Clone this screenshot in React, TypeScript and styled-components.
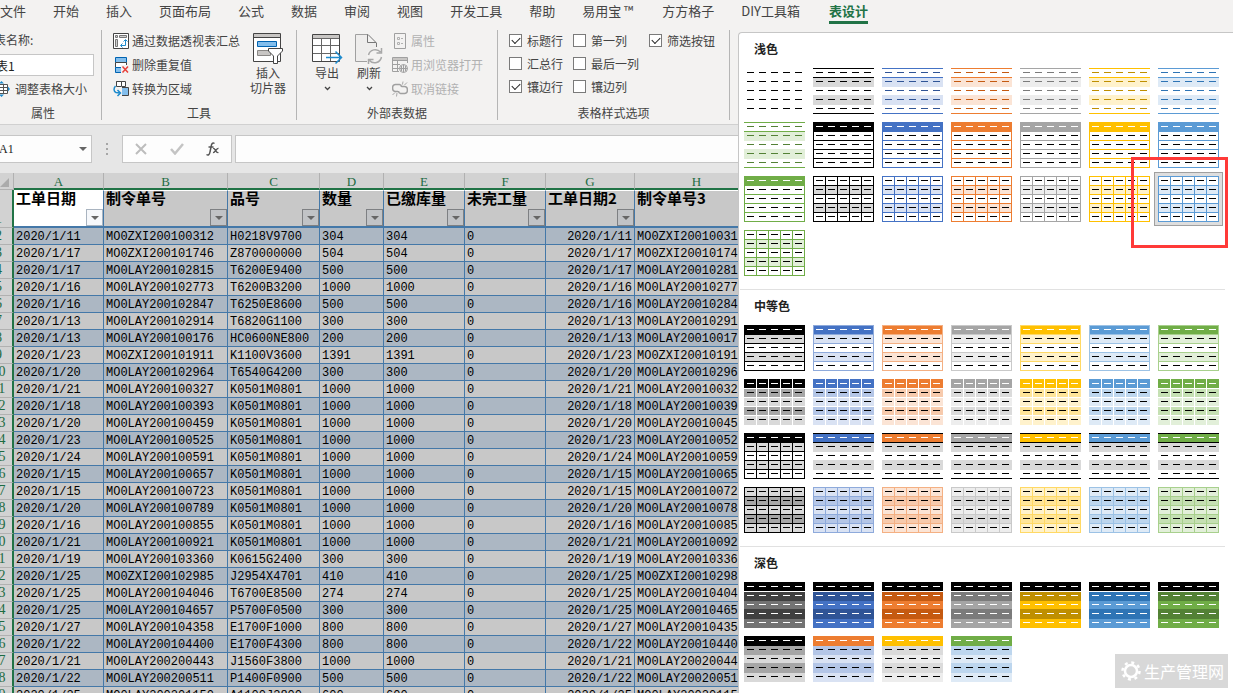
import React from 'react';
import styled, { createGlobalStyle, css } from 'styled-components';

const UI = '"Noto Sans CJK SC", "Liberation Sans", sans-serif';
const CELL = '"Liberation Mono", "Noto Sans CJK SC", monospace';
const SERIF = '"Liberation Serif", "Noto Sans CJK SC", serif';

const Global = createGlobalStyle`
  * { box-sizing: border-box; }
  body { margin: 0; background: #f3f2f1; font-family: ${UI}; }
  button, input { font: inherit; color: inherit; }
`;

/* ---------- shell ---------- */
const Shell = styled.div`
  position: relative;
  display: flex;
  flex-direction: column;
  height: 100vh;
  overflow: hidden;
  background: #f3f2f1;
  color: #444;
  font-size: 12px;
`;
const TabBar = styled.nav`
  display: flex;
  gap: 27px;
  height: 24px;
  flex: none;
`;
const Tab = styled.a<{ $active?: boolean; $latin?: boolean }>`
  font-size: 13px;
  line-height: 21px;
  height: 24px;
  padding-right: ${p => (p.$latin ? 2 : 0)}px;
  white-space: nowrap;
  text-decoration: none;
  color: #444;
  ${p => p.$active && css`
    color: #217346;
    font-weight: 700;
    border-bottom: 3px solid #217346;
  `}
`;
const Body = styled.div`
  display: flex;
  flex: 1;
  min-height: 0;
`;
const Workspace = styled.main`
  display: flex;
  flex-direction: column;
  flex: 1;
  min-width: 0;
  overflow: hidden;
`;

/* ---------- ribbon ---------- */
const Ribbon = styled.div`
  display: flex;
  flex: none;
  padding: 6px 0 4px;
  border-bottom: 1px solid #d0d0d0;
`;
const Group = styled.section<{ $width: number; $bleed?: boolean }>`
  display: flex;
  flex-direction: column;
  flex: none;
  width: ${p => p.$width}px;
  height: 90px;
  margin-left: ${p => (p.$bleed ? -15 : 0)}px;
  border-right: 1px solid #b5b5b5;
`;
const GroupBody = styled.div`
  display: flex;
  flex: 1;
  padding-left: 9px;
`;
const GroupLabel = styled.h2`
  margin: 0;
  font-size: 12px;
  font-weight: 400;
  line-height: 14px;
  text-align: center;
`;
const Stack = styled.div`
  display: flex;
  flex-direction: column;
  gap: 2px;
`;
const Command = styled.button`
  display: flex;
  align-items: center;
  gap: 3px;
  height: 22px;
  padding: 0 2px;
  border: 0;
  background: none;
  line-height: 22px;
  white-space: nowrap;
  &:disabled { color: #b1b1b1; }
  svg { flex: none; }
`;
const BigCommand = styled.button<{ $apart?: boolean }>`
  display: flex;
  flex-direction: column;
  align-items: center;
  width: 42px;
  height: 72px;
  margin-left: ${p => (p.$apart ? 5 : 0)}px;
  padding: 3px 0 0;
  border: 0;
  background: none;
  line-height: 15px;
  white-space: nowrap;
  svg + span { margin-top: 1px; }
`;
const FieldLabel = styled.label`
  height: 22px;
  line-height: 20px;
`;
const NameField = styled.input`
  width: 100px;
  height: 22px;
  padding: 0 1px;
  border: 1px solid #c6c6c6;
  background: #fff;
  color: #222;
  outline: 0;
`;
const TableStack = styled(Stack)`
  ${Command} { padding: 0; gap: 5px; }
`;
const Options = styled.div`
  display: grid;
  grid-template-columns: 64px 76px auto;
  grid-auto-rows: 21px;
  row-gap: 2px;
  padding-left: 2px;
`;
const Option = styled.label`
  display: flex;
  align-items: center;
  gap: 5px;
  white-space: nowrap;
`;
const Tick = styled.input`
  appearance: none;
  flex: none;
  width: 13px;
  height: 13px;
  margin: 0;
  border: 1px solid #7a7a7a;
  background: #fff;
  display: grid;
  place-items: center;
  &:checked::after {
    content: '';
    width: 7px;
    height: 4px;
    margin-bottom: 2px;
    border-left: 1px solid #222;
    border-bottom: 1px solid #222;
    transform: rotate(-45deg);
  }
`;

/* ---------- formula bar ---------- */
const FormulaBar = styled.div`
  display: flex;
  flex: none;
  height: 48px;
  padding: 10px 0;
  background: #e6e6e6;
`;
const NameBox = styled.button`
  display: flex;
  align-items: center;
  justify-content: space-between;
  width: 98px;
  margin-left: -6px;
  padding: 0 4px;
  border: 1px solid #c6c6c6;
  background: #fdfdfd;
  font-family: ${SERIF};
  font-size: 12px;
  color: #222;
`;
const Grip = styled.span`
  display: flex;
  width: 30px;
  align-items: center;
  justify-content: center;
`;
const FormulaButtons = styled.div`
  display: flex;
  width: 110px;
  margin-right: 3px;
  border: 1px solid #c6c6c6;
  background: #fdfdfd;
`;
const FormulaButton = styled.button`
  display: grid;
  place-items: center;
  flex: 1;
  padding: 0;
  border: 0;
  background: none;
`;
const FormulaInput = styled.input`
  flex: 1;
  min-width: 0;
  border: 1px solid #c6c6c6;
  border-right: 0;
  background: #fdfdfd;
  outline: 0;
`;

/* ---------- sheet ---------- */
const SheetView = styled.div`
  flex: 1;
  min-height: 0;
  overflow: hidden;
  background: #c8c8c8;
`;
const Sheet = styled.table`
  table-layout: fixed;
  width: 774px;
  margin-left: -15px;
  border-spacing: 0;
  color: #000;
`;
const ColumnHead = styled.th`
  height: 17px;
  padding: 2px 0 0;
  border-right: 1px solid #b1b1b1;
  border-bottom: 2px solid #217346;
  background: #d2d2d2;
  color: #1d6b42;
  font-family: ${SERIF};
  font-size: 13px;
  font-weight: 400;
  line-height: 13px;
`;
const Corner = styled.td`
  padding: 0 4px 2px;
  border-right: 1px solid #b1b1b1;
  border-bottom: 1px solid #b1b1b1;
  background: #d2d2d2;
  text-align: right;
  vertical-align: bottom;
  line-height: 0;
`;
const RowHead = styled.th`
  padding: 0;
  border-right: 2px solid #217346;
  border-bottom: 1px solid #b1b1b1;
  background: #d2d2d2;
  color: #1d6b42;
  font-family: ${SERIF};
  font-size: 14px;
  font-weight: 400;
  line-height: 16px;
  text-align: center;
  vertical-align: bottom;
`;
const FieldHead = styled.th<{ $current?: boolean }>`
  height: 38px;
  padding: 0;
  border-top: 1px solid #fff;
  border-right: 1px solid #4478a8;
  border-bottom: 2px solid #4478a8;
  background: ${p => (p.$current ? '#fff' : '#c8c8c8')};
  font-family: "Noto Sans CJK SC", sans-serif;
  font-size: 15px;
  font-weight: 700;
  text-align: left;
  vertical-align: top;
`;
const FieldName = styled.div`
  height: 18px;
  padding-left: 2px;
  line-height: 14px;
  white-space: nowrap;
`;
const Filter = styled.button<{ $current?: boolean }>`
  display: grid;
  place-items: center;
  width: 17px;
  height: 17px;
  margin-left: auto;
  padding: 0;
  border: 1px solid ${p => (p.$current ? '#a9b4c0' : '#7e8083')};
  background: ${p => (p.$current ? '#f6f8fb' : '#c1c3c6')};
`;
const Row = styled.tr`
  background: #c8c8c8;
  &:nth-child(even) { background: #acb7c3; }
`;
const Cell = styled.td<{ $end?: boolean }>`
  height: 17px;
  padding: 2px 2px 0;
  border-right: 1px solid #4478a8;
  border-bottom: 1px solid #4478a8;
  font-family: ${CELL};
  font-size: 12px;
  line-height: 14px;
  text-align: ${p => (p.$end ? 'right' : 'left')};
  white-space: nowrap;
`;

/* ---------- style gallery ---------- */
const Gallery = styled.aside`
  flex: none;
  width: 495px;
  margin-top: 8px;
  padding-left: 1px;
  border-top: 1px solid #c6c6c6;
  border-left: 1px solid #c6c6c6;
  border-radius: 4px 0 0 0;
  background: #fff;
`;
const GallerySection = styled.section`
  width: 485px;
  padding-bottom: 9px;
  & + & { border-top: 1px solid #e1e1e1; }
`;
const GalleryTitle = styled.h3`
  margin: 0;
  padding-left: 14px;
  color: #222;
  font-size: 12px;
  font-weight: 700;
  line-height: 31px;
`;
const SwatchGrid = styled.div`
  display: grid;
  grid-template-columns: repeat(7, 69px);
  grid-auto-rows: 54px;
`;
const SwatchButton = styled.button<{ $selected?: boolean }>`
  position: relative;
  display: grid;
  place-items: center;
  padding: 0;
  border: 1px solid ${p => (p.$selected ? '#a0a0a0' : 'transparent')};
  background: ${p => (p.$selected ? '#dedede' : 'transparent')};
  svg { display: block; }
`;
const Highlight = styled.span`
  position: absolute;
  left: -24px;
  top: -16px;
  width: 97px;
  height: 91px;
  border: 3px solid #ff3a38;
  pointer-events: none;
`;
const Watermark = styled.div`
  position: absolute;
  right: 5px;
  bottom: 5px;
  display: flex;
  align-items: center;
  gap: 2px;
  height: 34px;
  padding: 0 4px 0 5px;
  background: #d8d8d8;
  color: #fff;
  font-size: 16px;
  line-height: 34px;
`;

/* ---------- thumbnails ---------- */
type Hue = { base: string; dark: string; line: string; mid: string; light: string };
const BLACK: Hue = { base: '#000', dark: '#000', line: '#000', mid: '#a6a6a6', light: '#d9d9d9' };
const BLUE: Hue = { base: '#4472c4', dark: '#2f5496', line: '#8eaadb', mid: '#b4c6e7', light: '#d9e2f3' };
const ORANGE: Hue = { base: '#ed7d31', dark: '#c55a11', line: '#f4b083', mid: '#f7caac', light: '#fbe4d5' };
const GRAY: Hue = { base: '#a5a5a5', dark: '#7b7b7b', line: '#c9c9c9', mid: '#dbdbdb', light: '#ededed' };
const GOLD: Hue = { base: '#ffc000', dark: '#bf8f00', line: '#ffd965', mid: '#ffe599', light: '#fff2cc' };
const SKY: Hue = { base: '#5b9bd5', dark: '#2e74b5', line: '#9cc2e5', mid: '#bdd6ee', light: '#deeaf6' };
const GREEN: Hue = { base: '#70ad47', dark: '#538135', line: '#a8d08d', mid: '#c5e0b3', light: '#e2efd9' };
const HUES = [BLACK, BLUE, ORANGE, GRAY, GOLD, SKY, GREEN];

type Look = {
  fills: string[];
  h?: [number, string][];
  inner?: string;
  box?: string;
  head: string;
  dash: string;
};
const TOP = [0, 10, 19, 27, 37];
const END = [10, 19, 27, 37, 46];
const EVERY = [9, 18, 27, 36];
const lines = (ys: number[], c: string) => ys.map(y => [y, c] as [number, string]);

const Thumb = ({ look }: { look: Look }) => (
  <svg width="61" height="46" viewBox="0 0 61 46" shapeRendering="crispEdges" aria-hidden="true">
    {look.fills.map((f, i) => <rect key={i} x="0" y={TOP[i]} width="61" height={END[i] - TOP[i]} fill={f} />)}
    {look.inner && [12, 24, 36, 48].map(x => <rect key={x} x={x} y="0" width="1" height="46" fill={look.inner} />)}
    {look.h?.map(([y, c]) => <rect key={y} x="0" y={y} width="61" height="1" fill={c} />)}
    {look.box && <path d="M.5 .5H60.5V45.5H.5Z" fill="none" stroke={look.box} />}
    {[0, 1, 2, 3, 4].map(r => [0, 1, 2, 3, 4].map(c => (
      <rect key={`${r}-${c}`} x={3 + 12 * c} y={4 + 9 * r} width="7" height="1" fill={r === 0 ? look.head : look.dash} />
    )))}
  </svg>
);

const plain: Look = { fills: [], head: '#000', dash: '#000' };
const ruled = (u: Hue): Look => ({
  fills: ['#fff', u.light, '#fff', u.light, '#fff'],
  h: lines([0, 9, 45], u.base), head: u.dark, dash: u.dark,
});
const framed = (u: Hue): Look => ({
  fills: [u.base, '#fff', '#fff', '#fff', '#fff'],
  h: lines(EVERY, u.base), box: u.base, head: '#fff', dash: '#000',
});
const gridded = (u: Hue): Look => ({
  fills: ['#fff', u.light, '#fff', u.light, '#fff'],
  h: lines(EVERY, u.base), inner: u.base, box: u.base, head: '#000', dash: '#000',
});
const banded = (u: Hue): Look => ({
  fills: [u.base, u.light, '#fff', u.light, '#fff'],
  h: lines(EVERY, u.line), box: u.line, head: '#fff', dash: '#000',
});
const tiled = (u: Hue): Look => ({
  fills: [u.base, u.mid, u.light, u.mid, u.light],
  h: lines(EVERY, '#fff'), inner: '#fff', head: '#fff', dash: '#000',
});
const barred = (u: Hue): Look => ({
  fills: [u.base, '#d9d9d9', '#fff', '#d9d9d9', '#fff'],
  head: '#fff',
  dash: '#000',
  ...(u === BLACK
    ? { h: lines(EVERY, '#000'), inner: '#000', box: '#000' }
    : { h: lines([0, 9, 45], '#000') }),
});
const filled = (u: Hue): Look => ({
  fills: [u.light, u.mid, u.light, u.mid, u.light],
  h: lines(EVERY, u.line), inner: u.line, box: u.line, head: '#000', dash: '#000',
});
const deep = (u: Hue): Look => {
  const [a, b] = u === BLACK ? ['#404040', '#737373'] : [u.dark, u.base];
  return { fills: ['#000', a, b, a, b], h: lines([9], '#fff'), head: '#fff', dash: '#fff' };
};
const duo = (head: string, u: Hue): Look => ({
  fills: [head, u.mid, u.light, u.mid, u.light], head: '#fff', dash: '#000',
});

const SECTIONS: { title: string; looks: Look[]; selected?: number }[] = [
  { title: '浅色', looks: [plain, ...HUES.map(ruled), ...HUES.map(framed), ...HUES.map(gridded)], selected: 20 },
  { title: '中等色', looks: [...HUES.map(banded), ...HUES.map(tiled), ...HUES.map(barred), ...HUES.map(filled)] },
  { title: '深色', looks: [...HUES.map(deep), duo('#000', BLACK), duo(ORANGE.base, BLUE), duo(GOLD.base, GRAY), duo(GREEN.base, SKY)] },
];

/* ---------- data ---------- */
const TABS = ['文件', '开始', '插入', '页面布局', '公式', '数据', '审阅', '视图', '开发工具', '帮助', '易用宝 ™', '方方格子', 'DIY工具箱', '表设计'];
const LATIN = /[A-Z™]/;
const COLUMNS = [90, 124, 92, 64, 81, 81, 89, 124];
const FIELDS = ['工单日期', '制令单号', '品号', '数量', '已缴库量', '未完工量', '工单日期2', '制令单号3'];
const DATA = `11 MO0ZXI200100312 H0218V9700 304
17 MO0ZXI200101746 Z870000000 504
17 MO0LAY200102815 T6200E9400 500
16 MO0LAY200102773 T6200B3200 1000
16 MO0LAY200102847 T6250E8600 500
13 MO0LAY200102914 T6820G1100 300
13 MO0LAY200100176 HC0600NE800 200
23 MO0ZXI200101911 K1100V3600 1391
20 MO0LAY200102964 T6540G4200 300
21 MO0LAY200100327 K0501M0801 1000
18 MO0LAY200100393 K0501M0801 1000
20 MO0LAY200100459 K0501M0801 1000
23 MO0LAY200100525 K0501M0801 1000
24 MO0LAY200100591 K0501M0801 1000
15 MO0LAY200100657 K0501M0801 1000
15 MO0LAY200100723 K0501M0801 1000
20 MO0LAY200100789 K0501M0801 1000
16 MO0LAY200100855 K0501M0801 1000
21 MO0LAY200100921 K0501M0801 1000
19 MO0LAY200103360 K0615G2400 300
25 MO0ZXI200102985 J2954X4701 410
25 MO0LAY200104046 T6700E8500 274
25 MO0LAY200104657 P5700F0500 300
27 MO0LAY200104358 E1700F1000 800
22 MO0LAY200104400 E1700F4300 800
21 MO0LAY200200443 J1560F3800 1000
22 MO0LAY200200511 P1400F0900 500
25 MO0LAY200201150 A1100J3800 600`.split('\n').map(r => r.split(' '));

/* ---------- icons ---------- */
const svg = (w: number, h: number, children: React.ReactNode) => (
  <svg width={w} height={h} viewBox={`0 0 ${w} ${h}`} fill="none" aria-hidden="true">{children}</svg>
);
const PivotIcon = () => svg(16, 16, <>
  <path d="M.5 .5H15.5V15.5H.5Z" fill="#fff" stroke="#444" />
  <path d="M2.5 2.5H4.5V4.5H2.5ZM6.5 2.5H13.5V4.5H6.5ZM2.5 6.5H4.5V13.5H2.5Z" fill="#d0d0d0" stroke="#777" />
  <path d="M8 12.5H12.5V7M10.5 8.5L12.5 6.5L14.5 8.5M9.5 10.5L7.5 12.5L9.5 14.5" stroke="#1e8bcd" />
</>);
const DedupeIcon = () => svg(16, 16, <>
  <path d="M2.5 .5H13.5V5.5H2.5Z" fill="#83beec" stroke="#0063b1" />
  <path d="M2.5 5.5H13.5V10.5H2.5Z" fill="#fff" stroke="#444" />
  <path d="M2.5 10.5H8.5V15.5H2.5Z" fill="#83beec" stroke="#0063b1" />
  <path d="M8 8H16V16H8Z" fill="#f3f2f1" />
  <path d="M9.5 9.5L15 15.5M15 9.5L9.5 15.5" stroke="#e8403a" strokeWidth="1.5" />
</>);
const RangeIcon = () => svg(16, 16, <>
  <path d="M3.5 .5H12.5V5.5H3.5ZM8.5 .5V5.5" fill="#fff" stroke="#444" />
  <path d="M6.5 6.5H15.5V14.5H6.5Z" fill="#83beec" stroke="#444" />
  <path d="M3 5H9V15H3Z" fill="#f3f2f1" />
  <path d="M3.5 .5H8.5V5.5H3.5Z" fill="#fff" stroke="#444" />
  <path d="M2.500 5C.5 7 .5 10.500 3 11.500L7 12M4.500 9L7.500 12L4.500 15" stroke="#1e8bcd" strokeWidth="1.500" />
</>);
const ResizeIcon = () => svg(16, 16, <>
  <path d="M1.500 3.500H13.500V12.500H1.500ZM1.500 6.500H13.500M1.500 9.500H13.500M5.500 3.500V12.500M9.500 3.500V12.500" fill="#fff" stroke="#555" />
  <path d="M7.500 0L10 2.500H5ZM7.500 16L10 13.500H5ZM16 8L14 5.500V10.500Z" fill="#1e8bcd" />
</>);
const SlicerIcon = () => svg(30, 31, <>
  <path d="M.5 .5H27.5V28.5H.5Z" fill="#fff" stroke="#444" />
  <path d="M1 1H27V4H1Z" fill="#c8c6c4" /><path d="M1 4.500H27" stroke="#444" />
  <path d="M4.500 8.500H23.500V13.500H4.500Z" fill="#83beec" stroke="#0063b1" />
  <path d="M4.500 17.500H17.500V22.500H4.500Z" fill="#c8c6c4" stroke="#8a8886" />
  <path d="M15.500 15.500H29.500V18L24.500 23V30.500H20.500V23L15.500 18Z" fill="#fff" stroke="#444" />
</>);
const ExportIcon = () => svg(32, 31, <>
  <path d="M1.500 1.500H28.500V28.500H1.500Z" fill="#fff" stroke="#444" />
  <path d="M2 2H28V5H2Z" fill="#c8c6c4" />
  <path d="M2 5.500H28M2 12.500H28M2 20.500H28M10.500 5V28M19.500 5V28" stroke="#666" />
  <path d="M15 24.500H31M24.500 18.500L30.500 24.500L24.500 30.500" stroke="#1e8bcd" strokeWidth="1.500" />
</>);
const RefreshIcon = () => svg(28, 31, <>
  <path d="M1 1H13V10H21V14L12 19V28H1Z" fill="#eeedec" />
  <path d="M12 28.500H.5V1.500H13" stroke="#a0a0a0" />
  <path d="M12.500 1.500V9.500H21M13 1.500L21.500 10V14" stroke="#777" />
  <path d="M13.500 22A7 7 0 0 1 25.500 19M26.500 15V20H21.500M26.500 24A7 7 0 0 1 14.500 27.500M13.500 31V26.500H18.500" stroke="#a8a8a8" strokeWidth="1.500" />
</>);
const Chevron = () => svg(7, 15, <path d="M1 7L3.500 9.500L6 7" stroke="#444" strokeWidth="1.300" />);
const PropsIcon = () => svg(16, 16, <>
  <path d="M2.500 .5H13.500V15.500H2.500Z" stroke="#a0a0a0" />
  <path d="M5.500 4.500H7.500V6.500H5.500ZM5.500 9.500H7.500V11.500H5.500ZM9 5.500H11M9 10.500H11" stroke="#b1b1b1" />
</>);
const BrowserIcon = () => svg(16, 16, <>
  <path d="M.5 .5H15.500V6M.5 .5V14.500H7M.5 3.500H15.500M.5 7.500H8M.5 11.500H7M5.500 3V14" stroke="#a0a0a0" />
  <path d="M1 1H15V3H1Z" fill="#c8c6c4" />
  <circle cx="11.500" cy="11.500" r="4" fill="#eee" stroke="#a0a0a0" />
  <path d="M7.500 11.500H15.500M11.500 7.500V15.500M9.500 9V14M13.500 9V14" stroke="#a0a0a0" />
</>);
const UnlinkIcon = () => svg(16, 16, <>
  <path d="M6 10.500H3.500A2.500 3 0 0 1 3.500 3.500H7.500A2.500 2.500 0 0 1 9.500 6M9.500 5.500H12.500A2.500 3 0 0 1 12.500 12.500H8.500A2.500 2.500 0 0 1 6.500 10" stroke="#a0a0a0" strokeWidth="1.500" />
  <path d="M10.500 3.500L11 .5M12.500 4L15 1.500M5 12L4.500 15.500M3 11.500L.5 14" stroke="#a8a8a8" />
</>);
const Arrow = ({ color = '#666', w = 8 }: { color?: string; w?: number }) =>
  svg(w, 4, <path d={`M0 0H${w}L${w / 2} 4Z`} fill={color} />);
const GearIcon = () => svg(22, 22, <>
  <circle cx="11" cy="11" r="6" stroke="#fff" strokeWidth="2.500" />
  <circle cx="11" cy="11" r="8.500" stroke="#fff" strokeWidth="2.500" strokeDasharray="3 3.676" />
</>);

const OPTIONS: [string, boolean][] = [
  ['标题行', true], ['第一列', false], ['筛选按钮', true],
  ['汇总行', false], ['最后一列', false], ['', false],
  ['镶边行', true], ['镶边列', false],
];

export default function App() {
  return (
    <Shell>
      <Global />
      <TabBar>
        {TABS.map(t => <Tab key={t} href="#" $active={t === '表设计'} $latin={LATIN.test(t)}>{t}</Tab>)}
      </TabBar>
      <Body>
        <Workspace>
          <Ribbon>
            <Group $width={117} $bleed>
              <GroupBody>
                <TableStack>
                  <FieldLabel htmlFor="table-name">表名称:</FieldLabel>
                  <NameField id="table-name" defaultValue="表1" />
                  <Command><ResizeIcon />调整表格大小</Command>
                </TableStack>
              </GroupBody>
              <GroupLabel>属性</GroupLabel>
            </Group>
            <Group $width={195}>
              <GroupBody>
                <Stack>
                  <Command><PivotIcon />通过数据透视表汇总</Command>
                  <Command><DedupeIcon />删除重复值</Command>
                  <Command><RangeIcon />转换为区域</Command>
                </Stack>
                <BigCommand $apart><SlicerIcon /><span>插入</span><span>切片器</span></BigCommand>
              </GroupBody>
              <GroupLabel>工具</GroupLabel>
            </Group>
            <Group $width={201}>
              <GroupBody>
                <BigCommand><ExportIcon /><span>导出</span><Chevron /></BigCommand>
                <BigCommand><RefreshIcon /><span>刷新</span><Chevron /></BigCommand>
                <Stack>
                  <Command disabled><PropsIcon />属性</Command>
                  <Command disabled><BrowserIcon />用浏览器打开</Command>
                  <Command disabled><UnlinkIcon />取消链接</Command>
                </Stack>
              </GroupBody>
              <GroupLabel>外部表数据</GroupLabel>
            </Group>
            <Group $width={232}>
              <GroupBody>
                <Options>
                  {OPTIONS.map(([name, on], i) => name
                    ? <Option key={name}><Tick type="checkbox" defaultChecked={on} />{name}</Option>
                    : <span key={i} />)}
                </Options>
              </GroupBody>
              <GroupLabel>表格样式选项</GroupLabel>
            </Group>
          </Ribbon>
          <FormulaBar>
            <NameBox>A1<Arrow /></NameBox>
            <Grip>{svg(2, 12, <path d="M0 0H2V2H0ZM0 5H2V7H0ZM0 10H2V12H0Z" fill="#a6a6a6" />)}</Grip>
            <FormulaButtons>
              <FormulaButton aria-label="取消">{svg(12, 12, <path d="M1 1L11 11M11 1L1 11" stroke="#bdbdbd" strokeWidth="2" />)}</FormulaButton>
              <FormulaButton aria-label="输入">{svg(14, 12, <path d="M1 6L5 10.500L13 1" stroke="#c4c4c4" strokeWidth="2.500" />)}</FormulaButton>
              <FormulaButton aria-label="插入函数">{svg(14, 14, <>
                <path d="M8.500 1.500C6.500 0 5.500 2 5 5L4 10C3.500 13 2 13.500 .5 12.500M2.500 5H7.500" stroke="#555" strokeWidth="1.500" />
                <path d="M7 6.500C9.500 5.500 9.500 11.500 12.500 10.500M12.500 6.500C10.500 6 9 11 7 10.500" stroke="#555" strokeWidth="1.300" />
              </>)}</FormulaButton>
            </FormulaButtons>
            <FormulaInput aria-label="编辑栏" />
          </FormulaBar>
          <SheetView>
            <Sheet>
              <colgroup>
                <col width={29} />
                {COLUMNS.map((w, i) => <col key={i} width={w} />)}
              </colgroup>
              <thead>
                <tr>
                  <Corner>{svg(9, 9, <path d="M9 0V9H0Z" fill="#ababab" />)}</Corner>
                  {COLUMNS.map((_, i) => <ColumnHead key={i}>{'ABCDEFGH'[i]}</ColumnHead>)}
                </tr>
              </thead>
              <tbody>
                <tr>
                  <RowHead>1</RowHead>
                  {FIELDS.map((f, i) => (
                    <FieldHead key={f} $current={i === 0}>
                      <FieldName>{f}</FieldName>
                      <Filter $current={i === 0} aria-label={f}><Arrow /></Filter>
                    </FieldHead>
                  ))}
                </tr>
                {DATA.map(([day, order, part, qty], i) => (
                  <Row key={i}>
                    <RowHead>{i + 2}</RowHead>
                    <Cell>2020/1/{day}</Cell>
                    <Cell>{order}</Cell>
                    <Cell>{part}</Cell>
                    <Cell>{qty}</Cell>
                    <Cell>{qty}</Cell>
                    <Cell>0</Cell>
                    <Cell $end>2020/1/{day}</Cell>
                    <Cell>{order}</Cell>
                  </Row>
                ))}
              </tbody>
            </Sheet>
          </SheetView>
        </Workspace>
        <Gallery>
          {SECTIONS.map(s => (
            <GallerySection key={s.title}>
              <GalleryTitle>{s.title}</GalleryTitle>
              <SwatchGrid>
                {s.looks.map((look, i) => (
                  <SwatchButton key={i} $selected={s.selected === i} aria-label={`${s.title} ${i + 1}`}>
                    <Thumb look={look} />
                    {s.selected === i && <Highlight />}
                  </SwatchButton>
                ))}
              </SwatchGrid>
            </GallerySection>
          ))}
        </Gallery>
      </Body>
      <Watermark><GearIcon />生产管理网</Watermark>
    </Shell>
  );
}
